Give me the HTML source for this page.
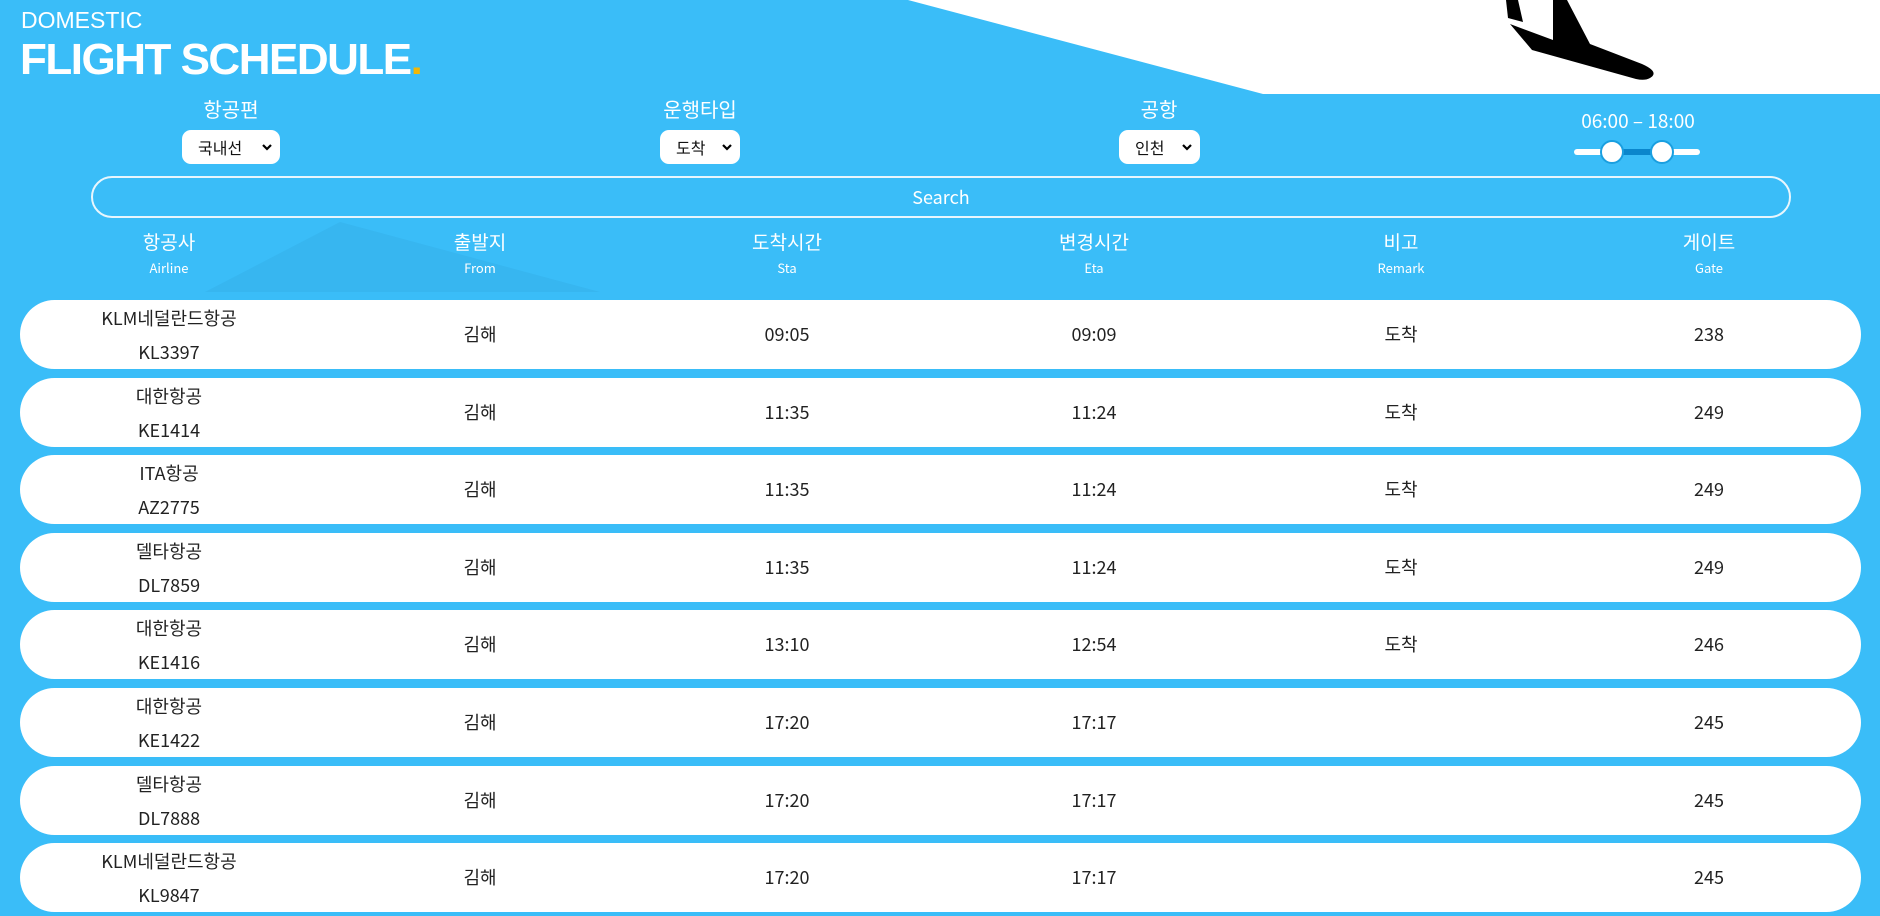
<!DOCTYPE html>
<html><head><meta charset="utf-8"><style>
*{margin:0;padding:0;box-sizing:border-box}
body{width:1880px;height:916px;overflow:hidden;background:#3abdf8;font-family:"Noto Sans CJK KR","Liberation Sans",sans-serif;color:#fff;position:relative}
.abs{position:absolute}
.c{transform:translateX(-50%);text-align:center;white-space:nowrap}
.sel{position:absolute;background:#fff;border-radius:9px;height:34px;color:#111;font-size:16px;line-height:34px;padding-left:16px}
.sel svg{position:absolute;right:7px;top:13px}
.row{position:absolute;left:20px;width:1841px;height:69px;background:#fff;border-radius:35px;color:#222;font-size:18px}
.row div{position:absolute;transform:translateX(-50%);text-align:center;white-space:nowrap;top:0;line-height:69px}
.row div.a{top:1px;line-height:34px}
.hk{font-size:19px;top:228px}
.he{font-size:13px;top:258px}
</style></head><body>
<svg class="abs" style="left:0;top:0" width="1880" height="916">
<polygon points="908,0 1880,0 1880,94 1263,94" fill="#fff"/>
<polygon points="340,222 205,292 600,292" fill="#37b6f0"/>
<g fill="#000">
<polygon points="1506,0 1518,0 1523,22 1508,18"/>
<path d="M1510,24 L1553,40 L1553,0 L1567,0 L1590,44 L1642,64 Q1660,72 1650,78 Q1645,81 1636,79 L1532,50 Z"/>
</g>
</svg>
<div class="abs" style="left:21px;top:7px;font-size:23px;font-family:'Liberation Sans',sans-serif">DOMESTIC</div>
<div class="abs" style="left:20px;top:35px;font-size:44px;font-weight:bold;letter-spacing:-1.5px;font-family:'Liberation Sans',sans-serif">FLIGHT SCHEDULE<span style="color:#f2b705">.</span></div>

<div class="abs c" style="left:231px;top:94px;font-size:20px">항공편</div>
<div class="sel" style="left:182px;top:130px;width:98px">국내선<svg width="12" height="9"><path d="M2 2l4 4 4-4" stroke="#000" stroke-width="2.2" fill="none"/></svg></div>
<div class="abs c" style="left:700px;top:94px;font-size:20px">운행타입</div>
<div class="sel" style="left:660px;top:130px;width:80px">도착<svg width="12" height="9"><path d="M2 2l4 4 4-4" stroke="#000" stroke-width="2.2" fill="none"/></svg></div>
<div class="abs c" style="left:1159px;top:94px;font-size:20px">공항</div>
<div class="sel" style="left:1119px;top:130px;width:81px">인천<svg width="12" height="9"><path d="M2 2l4 4 4-4" stroke="#000" stroke-width="2.2" fill="none"/></svg></div>
<div class="abs c" style="left:1638px;top:107px;font-size:19px">06:00 – 18:00</div>
<svg class="abs" style="left:1570px;top:138px" width="135" height="28">
<rect x="4" y="11" width="126" height="6" rx="3" fill="#fff"/>
<rect x="42" y="11" width="50" height="6" fill="#0a86cc"/>
<circle cx="42" cy="14" r="11" fill="#fff" stroke="#1a9fe0" stroke-width="2"/>
<circle cx="92" cy="14" r="11" fill="#fff" stroke="#1a9fe0" stroke-width="2"/>
</svg>
<div class="abs" style="left:91px;top:176px;width:1700px;height:42px;border:2px solid #e8f6fd;border-radius:21px;text-align:center;line-height:38px;font-size:18px">Search</div>

<div class="abs c hk" style="left:169px">항공사</div><div class="abs c he" style="left:169px">Airline</div>
<div class="abs c hk" style="left:480px">출발지</div><div class="abs c he" style="left:480px">From</div>
<div class="abs c hk" style="left:787px">도착시간</div><div class="abs c he" style="left:787px">Sta</div>
<div class="abs c hk" style="left:1094px">변경시간</div><div class="abs c he" style="left:1094px">Eta</div>
<div class="abs c hk" style="left:1401px">비고</div><div class="abs c he" style="left:1401px">Remark</div>
<div class="abs c hk" style="left:1709px">게이트</div><div class="abs c he" style="left:1709px">Gate</div>

<div class="row" style="top:300px"><div class="a" style="left:149px">KLM네덜란드항공<br>KL3397</div><div style="left:460px">김해</div><div style="left:767px">09:05</div><div style="left:1074px">09:09</div><div style="left:1381px">도착</div><div style="left:1689px">238</div></div>
<div class="row" style="top:378px"><div class="a" style="left:149px">대한항공<br>KE1414</div><div style="left:460px">김해</div><div style="left:767px">11:35</div><div style="left:1074px">11:24</div><div style="left:1381px">도착</div><div style="left:1689px">249</div></div>
<div class="row" style="top:455px"><div class="a" style="left:149px">ITA항공<br>AZ2775</div><div style="left:460px">김해</div><div style="left:767px">11:35</div><div style="left:1074px">11:24</div><div style="left:1381px">도착</div><div style="left:1689px">249</div></div>
<div class="row" style="top:533px"><div class="a" style="left:149px">델타항공<br>DL7859</div><div style="left:460px">김해</div><div style="left:767px">11:35</div><div style="left:1074px">11:24</div><div style="left:1381px">도착</div><div style="left:1689px">249</div></div>
<div class="row" style="top:610px"><div class="a" style="left:149px">대한항공<br>KE1416</div><div style="left:460px">김해</div><div style="left:767px">13:10</div><div style="left:1074px">12:54</div><div style="left:1381px">도착</div><div style="left:1689px">246</div></div>
<div class="row" style="top:688px"><div class="a" style="left:149px">대한항공<br>KE1422</div><div style="left:460px">김해</div><div style="left:767px">17:20</div><div style="left:1074px">17:17</div><div style="left:1689px">245</div></div>
<div class="row" style="top:766px"><div class="a" style="left:149px">델타항공<br>DL7888</div><div style="left:460px">김해</div><div style="left:767px">17:20</div><div style="left:1074px">17:17</div><div style="left:1689px">245</div></div>
<div class="row" style="top:843px"><div class="a" style="left:149px">KLM네덜란드항공<br>KL9847</div><div style="left:460px">김해</div><div style="left:767px">17:20</div><div style="left:1074px">17:17</div><div style="left:1689px">245</div></div>
</body></html>
